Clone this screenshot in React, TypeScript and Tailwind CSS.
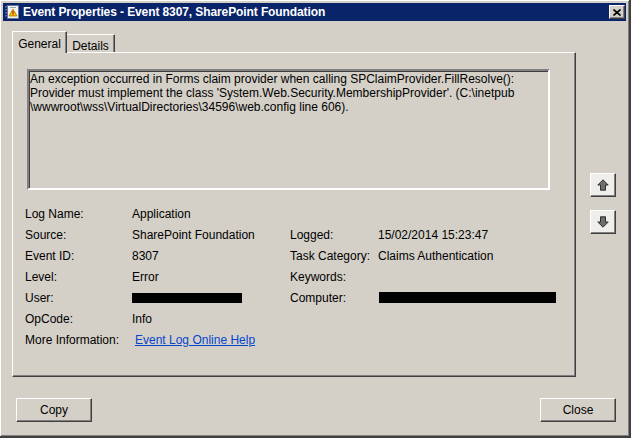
import React from "react";

function TitleIcon() {
  return (
    <svg width="16" height="16" viewBox="0 0 16 16">
      <rect x="3.5" y="1.5" width="11" height="13" fill="#f4f4f4" stroke="#6a7490" />
      <rect x="1" y="2" width="3" height="1.5" fill="#5a6aa8" />
      <rect x="1" y="5" width="3" height="1.5" fill="#5a6aa8" />
      <rect x="1" y="8" width="3" height="1.5" fill="#5a6aa8" />
      <rect x="1" y="11" width="3" height="1.5" fill="#5a6aa8" />
      <rect x="6" y="3" width="6" height="1" fill="#9aa4c0" />
      <path d="M9 5 L13 12 H5 Z" fill="#f5c400" stroke="#b07800" strokeWidth="0.8" />
      <rect x="8.5" y="7" width="1" height="3" fill="#c00000" />
      <rect x="8.5" y="10.6" width="1" height="1" fill="#c00000" />
    </svg>
  );
}

function Arrow({ down }: { down?: boolean }) {
  return (
    <svg width="12" height="12" viewBox="0 0 12 12" style={{ transform: down ? "rotate(180deg)" : undefined }}>
      <path d="M6 0.8 L11.2 6 H8.5 V11.2 H3.5 V6 H0.8 Z" fill="#6e6e6e" stroke="#2e2e2e" strokeWidth="1" strokeLinejoin="miter" />
    </svg>
  );
}

const raised =
  "border border-t-white border-l-white border-r-[#404040] border-b-[#404040] shadow-[inset_-1px_-1px_0_#808080]";

export default function App() {
  const left: [string, React.ReactNode][] = [
    ["Log Name:", "Application"],
    ["Source:", "SharePoint Foundation"],
    ["Event ID:", "8307"],
    ["Level:", "Error"],
    ["User:", <span className="block w-[110px] h-[10px] bg-black mt-[1px]" />],
    ["OpCode:", "Info"],
    [
      "More Information:",
      <span className="text-[#0645cc] underline ml-[3px]">Event Log Online Help</span>,
    ],
  ];
  const right: ([string, React.ReactNode] | null)[] = [
    null,
    ["Logged:", "15/02/2014 15:23:47"],
    ["Task Category:", "Claims Authentication"],
    ["Keywords:", ""],
    ["Computer:", <span className="block w-[177px] h-[11px] bg-black ml-[1px]" />],
    null,
    null,
  ];

  return (
    <div
      className="w-[631px] h-[438px] bg-[#d4d0c8] border-r-2 border-b-2 border-r-[#404040] border-b-[#404040] shadow-[inset_1px_1px_0_#ffffff,inset_-1px_-1px_0_#808080] p-[3px] flex flex-col text-[12px] text-black"
      style={{ fontFamily: '"Liberation Sans", Arial, sans-serif' }}
    >
      {/* Title bar */}
      <div className="h-[18px] bg-[#0a246a] flex items-center pl-[1px] pr-[1px] shrink-0">
        <TitleIcon />
        <span className="ml-[3px] text-white font-bold text-[12px] leading-none tracking-[-0.1px]">
          Event Properties - Event 8307, SharePoint Foundation
        </span>
        <div
          className={`ml-auto w-[16px] h-[14px] bg-[#d4d0c8] flex items-center justify-center ${raised}`}
        >
          <svg width="8" height="7" viewBox="0 0 8 7">
            <path d="M0.5 0.5 L7.5 6.5 M7.5 0.5 L0.5 6.5" stroke="#000" strokeWidth="1.6" />
          </svg>
        </div>
      </div>

      {/* Body */}
      <div className="flex pl-[9px] pt-[10px]">
        <div className="w-[564px] flex flex-col">
          {/* Tabs */}
          <div className="flex items-end h-[21px]">
            <div className="relative z-10 -mb-px h-[22px] w-[55px] bg-[#d4d0c8] border-t border-l border-r border-t-white border-l-white border-r-[#404040] shadow-[inset_-1px_0_0_#808080] flex items-start justify-center pt-[3px]">
              General
            </div>
            <div className="h-[18px] w-[48px] border-t border-r border-t-white border-r-[#404040] shadow-[inset_-1px_0_0_#808080] flex items-start justify-center pt-[2px]">
              Details
            </div>
          </div>
          {/* Panel */}
          <div className={`h-[325px] ${raised}`}>
            <div className="ml-[14px] mt-[16px] w-[523px] h-[121px] border-2 border-t-[#808080] border-l-[#808080] border-r-white border-b-white shadow-[inset_1px_1px_0_#404040] px-[1px] pt-[1px] leading-[14px] whitespace-nowrap">
              <div>An exception occurred in Forms claim provider when calling SPClaimProvider.FillResolve():</div>
              <div>Provider must implement the class 'System.Web.Security.MembershipProvider'. (C:\inetpub</div>
              <div>\wwwroot\wss\VirtualDirectories\34596\web.config line 606).</div>
            </div>
            <div className="ml-[12px] mt-[13px] grid grid-cols-[107px_158px_88px_auto] auto-rows-[21px] items-center">
              {left.map(([l, v], i) => (
                <React.Fragment key={i}>
                  <div>{l}</div>
                  <div>{v}</div>
                  <div>{right[i] ? right[i]![0] : ""}</div>
                  <div>{right[i] ? right[i]![1] : ""}</div>
                </React.Fragment>
              ))}
            </div>
          </div>
        </div>
        {/* Arrow buttons */}
        <div className="ml-[14px] mt-[142px] flex flex-col gap-[13px]">
          <div className={`w-[26px] h-[24px] bg-[#efeeea] flex items-center justify-center ${raised}`}>
            <Arrow />
          </div>
          <div className={`w-[26px] h-[24px] bg-[#efeeea] flex items-center justify-center ${raised}`}>
            <Arrow down />
          </div>
        </div>
      </div>

      {/* Bottom buttons */}
      <div className="flex justify-between pl-[13px] pr-[10px] mt-[21px]">
        <div className={`w-[76px] h-[24px] flex items-center justify-center ${raised}`}>Copy</div>
        <div className={`w-[76px] h-[24px] flex items-center justify-center ${raised}`}>Close</div>
      </div>
    </div>
  );
}
